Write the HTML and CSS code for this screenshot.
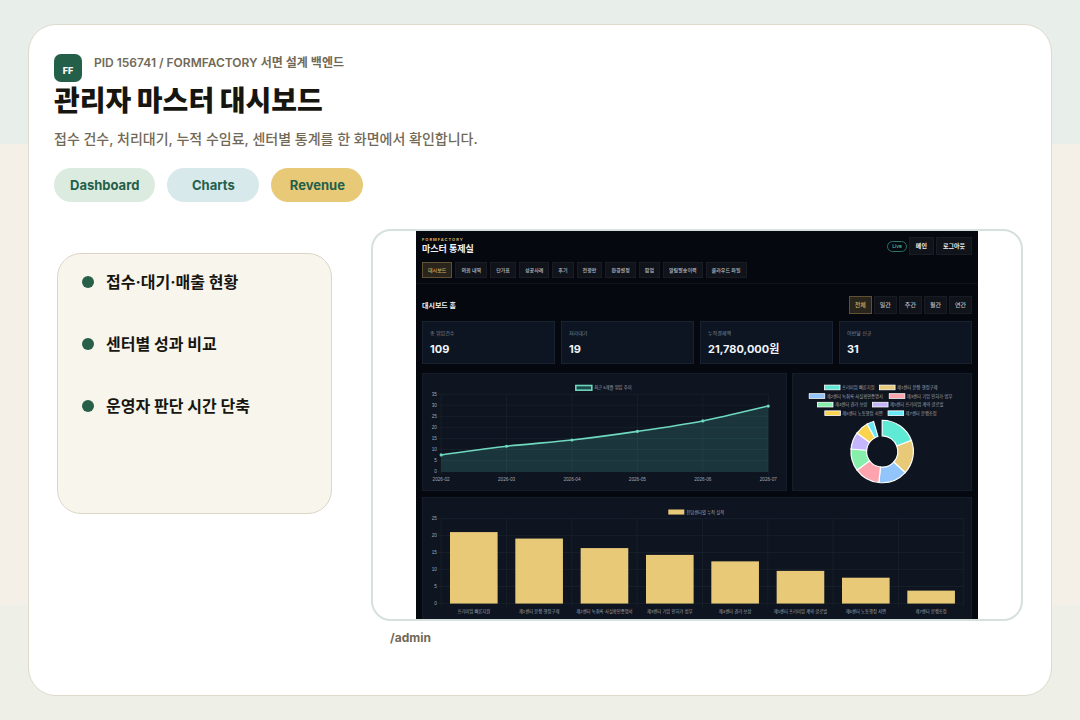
FILE: index.html
```
<!DOCTYPE html>
<html lang="ko">
<head>
    <meta charset="UTF-8">
    <meta name="viewport" content="width=device-width, initial-scale=1.0">
    <title>관리자 마스터 대시보드</title>
    <link rel="stylesheet" href="styles.css">
</head>
<body>
    <main class="sheet">
        <header class="intro">
            <div class="logo">FF</div>
            <p class="eyebrow">PID 156741 / FORMFACTORY 서면 설계 백엔드</p>
        </header>
        <h1>관리자 마스터 대시보드</h1>
        <p class="lead">접수 건수, 처리대기, 누적 수임료, 센터별 통계를 한 화면에서 확인합니다.</p>
        <div class="tags">
            <span class="tag green">Dashboard</span>
            <span class="tag blue">Charts</span>
            <span class="tag gold">Revenue</span>
        </div>

        <div class="content">
            <ul class="points">
                <li>접수·대기·매출 현황</li>
                <li>센터별 성과 비교</li>
                <li>운영자 판단 시간 단축</li>
            </ul>

            <figure class="preview">
                <div class="frame">
                    <div class="admin">
                        <div class="admin-header">
                            <div class="admin-top">
                                <div>
                                    <div class="brand">FORMFACTORY</div>
                                    <h2>마스터 통제실</h2>
                                </div>
                                <div class="actions">
                                    <span class="live">Live</span>
                                    <button>메인</button>
                                    <button>로그아웃</button>
                                </div>
                            </div>
                            <nav class="menu">
                                <button class="active">대시보드</button>
                                <button>의뢰 내역</button>
                                <button>단가표</button>
                                <button>성공사례</button>
                                <button>후기</button>
                                <button>전광판</button>
                                <button>환경설정</button>
                                <button>팝업</button>
                                <button>알림발송이력</button>
                                <button>클라우드 파일</button>
                            </nav>
                        </div>

                        <div class="admin-body">
                            <div class="section-head">
                                <h3>대시보드 홈</h3>
                                <div class="period">
                                    <button class="active">전체</button>
                                    <button>일간</button>
                                    <button>주간</button>
                                    <button>월간</button>
                                    <button>연간</button>
                                </div>
                            </div>
                            <div class="stats">
                                <div class="stat"><span>총 위임건수</span><strong>109</strong></div>
                                <div class="stat"><span>처리대기</span><strong>19</strong></div>
                                <div class="stat"><span>누적결제액</span><strong>21,780,000원</strong></div>
                                <div class="stat"><span>이번달 신규</span><strong>31</strong></div>
                            </div>
                            <div class="charts">
                                <div class="panel"><svg id="trend" viewBox="0 0 935 302"></svg></div>
                                <div class="panel"><svg id="share" viewBox="0 0 461 302"></svg></div>
                            </div>
                            <div class="panel"><svg id="centers" viewBox="0 0 1409 330"></svg></div>
                        </div>
                    </div>
                </div>
                <figcaption>/admin</figcaption>
            </figure>
        </div>
    </main>

    <script src="charts.js"></script>
</body>
</html>
```
FILE: styles.css
```
* {
    box-sizing: border-box;
}

body {
    margin: 0;
    min-height: 100vh;
    padding: 24px 28px;
    font-family: Inter, "Noto Sans CJK KR", sans-serif;
    color: #17150f;
    background: linear-gradient(#e8eee9 20%, #f4f0e8 20%, #f4f0e8 84%, #eeefe6 84%);
}

h1, h2, h3, p, ul, figure {
    margin: 0;
    padding: 0;
}

button {
    font-family: inherit;
    margin: 0;
    cursor: pointer;
}

.sheet {
    min-height: calc(100vh - 48px);
    padding: 29px 28px 29px 25px;
    border: 1px solid #dddacb;
    border-radius: 28px;
    background: #fff;
}

.intro {
    display: flex;
    gap: 12px;
}

.logo {
    width: 28px;
    height: 28px;
    padding-top: 4px;
    border-radius: 7px;
    background: #245f49;
    color: #fff;
    font-size: 9px;
    font-weight: 800;
    line-height: 26px;
    text-align: center;
}

.eyebrow {
    color: #716956;
    font-size: 12px;
    font-weight: 600;
    line-height: 18px;
}

h1 {
    font-size: 28px;
    font-weight: 900;
    line-height: 38px;
}

.lead {
    margin-top: 8px;
    color: #716956;
    font-size: 14px;
    font-weight: 500;
    line-height: 22px;
}

.tags {
    display: flex;
    gap: 12px;
    margin-top: 18px;
}

.tag {
    min-width: 92px;
    padding: 0 16px;
    border-radius: 17px;
    color: #245f49;
    font-size: 13px;
    font-weight: 700;
    line-height: 34px;
    text-align: center;
}

.green {
    background: #dcebdf;
}

.blue {
    background: #d8e9ec;
}

.gold {
    background: #e7c978;
}

.content {
    display: flex;
    align-items: flex-start;
    gap: 39px;
    margin-top: 27px;
}

.points {
    flex: 0 0 275px;
    display: flex;
    flex-direction: column;
    gap: 38px;
    min-height: 261px;
    margin: 24px 0 0 3px;
    padding: 16px 24px;
    border: 1px solid #ddd6c6;
    border-radius: 24px;
    background: #f8f5ed;
    list-style: none;
}

.points li {
    display: flex;
    align-items: center;
    gap: 12px;
    font-size: 16px;
    font-weight: 700;
    line-height: 24px;
}

.points li::before {
    content: "";
    width: 12px;
    height: 12px;
    border-radius: 50%;
    background: #285f49;
}

.preview {
    flex: 1;
    min-width: 0;
}

.frame {
    padding: 0 43px;
    border: 2px solid #d6e0dc;
    border-radius: 20px;
    overflow: hidden;
}

figcaption {
    margin-left: 19px;
    padding-top: 8px;
    color: #716956;
    font-size: 12px;
    font-weight: 700;
    line-height: 18px;
}

/* admin screen */
.admin {
    aspect-ratio: 562 / 388;
    min-height: 0;
    overflow: hidden;
    background: #05080f;
    color: #f1f4f9;
}

.admin button {
    padding: 0 5px;
    border: 1px solid #191d23;
    border-radius: 0;
    background: #10141a;
    color: #b9bec6;
    font-size: 5px;
    font-weight: 500;
    line-height: 14px;
    white-space: nowrap;
}

.admin button.active {
    border-color: #5f5131;
    background: #29251c;
    color: #d0ae62;
}

.admin-header {
    padding: 6px 6px 5px;
    border-bottom: 1px solid #0e131a;
}

.admin-top {
    display: flex;
    justify-content: space-between;
}

.brand {
    color: #d8b766;
    font-size: 4px;
    font-weight: 700;
    line-height: 6px;
    letter-spacing: 1px;
}

h2 {
    font-size: 9px;
    font-weight: 700;
    line-height: 12px;
}

.actions {
    display: flex;
    align-items: center;
    gap: 2px;
}

.live {
    padding: 0 4px;
    border: 1px solid #2b7564;
    border-radius: 6px;
    color: #5bd6b0;
    font-size: 5px;
    line-height: 9px;
}

.admin .actions button,
.admin .period button {
    font-size: 6px;
    line-height: 16px;
}

.admin .actions button {
    padding: 0 6px;
    color: #eef1f5;
    font-weight: 600;
}

.menu {
    display: flex;
    gap: 3px;
    margin-top: 7px;
}

.admin-body {
    display: flex;
    flex-direction: column;
    padding: 12px 6px 0;
}

.section-head {
    display: flex;
    align-items: center;
    justify-content: space-between;
}

h3 {
    font-size: 7px;
    font-weight: 700;
}

.period {
    display: flex;
    gap: 2px;
}

.stats {
    display: grid;
    grid-template-columns: repeat(4, 1fr);
    gap: 6px;
    margin-top: 7px;
}

.stat {
    display: flex;
    flex-direction: column;
    padding: 7px 7px 6px;
    border: 1px solid #182231;
    background: #0e1522;
}

.stat span {
    color: #7d8795;
    font-size: 5px;
    line-height: 8px;
}

.stat strong {
    margin-top: 4px;
    font-size: 11px;
    line-height: 16px;
}

.charts {
    display: grid;
    grid-template-columns: 935fr 461fr;
    gap: 5px;
    margin: 9px 0 6px;
}

.panel {
    background: #0e1420;
    outline: 1px solid #141d29;
    outline-offset: -1px;
}

.panel svg {
    display: block;
    width: 100%;
}

svg text {
    fill: #a0a7b1;
    font-family: "Liberation Sans", "Noto Sans CJK KR", sans-serif;
    font-size: 12px;
}

.legend {
    font-size: 11px;
}

.grid-line {
    stroke: #18232c;
    stroke-width: 2;
}

.trend-line {
    fill: none;
    stroke: #6fd9c0;
    stroke-width: 4;
}

.trend-area {
    fill: #5eead4;
    fill-opacity: 0.16;
}

.trend-key {
    fill: #1d4a4c;
    stroke: #6fd9c0;
    stroke-width: 4;
}

.bar {
    fill: #e7c978;
}

.slice {
    stroke: #fff;
    stroke-width: 3;
}

.swatch {
    stroke: #fff;
    stroke-width: 2;
}
```
FILE: charts.js
```
const NS = "http://www.w3.org/2000/svg";

function add(svg, tag, attrs, text) {
    const el = document.createElementNS(NS, tag);
    for (const key in attrs) el.setAttribute(key, attrs[key]);
    if (text !== undefined) el.textContent = text;
    svg.appendChild(el);
}

function drawGrid(svg, box, max, columns) {
    for (let v = 0; v <= max; v += 5) {
        const y = box.bottom - (box.bottom - box.top) * v / max;
        add(svg, "line", { class: "grid-line", x1: box.left - 8, y1: y, x2: box.right, y2: y });
        add(svg, "text", { x: box.left - 11, y: y + 4, "text-anchor": "end" }, v);
    }
    for (let i = 0; i <= columns; i++) {
        const x = box.left + (box.right - box.left) * i / columns;
        add(svg, "line", { class: "grid-line", x1: x, y1: box.top, x2: x, y2: box.bottom + 8 });
    }
}

function drawTrend() {
    const svg = document.getElementById("trend");
    const box = { left: 49, right: 887, top: 54, bottom: 253 };
    const labels = ["2026-02", "2026-03", "2026-04", "2026-05", "2026-06", "2026-07"];
    const values = [7.6, 11.5, 14.3, 18.2, 22.9, 29.6];
    const tension = 0.15;
    drawGrid(svg, box, 35, 5);

    const step = (box.right - box.left) / 5;
    const points = values.map((v, i) => [box.left + i * step, box.bottom - (box.bottom - box.top) * v / 35]);
    let path = `M${points[0]}`;
    for (let i = 1; i < points.length; i++) {
        const before = points[Math.max(i - 2, 0)], a = points[i - 1], b = points[i];
        const after = points[Math.min(i + 1, points.length - 1)];
        const c1 = [a[0] + (b[0] - before[0]) * tension, a[1] + (b[1] - before[1]) * tension];
        const c2 = [b[0] - (after[0] - a[0]) * tension, b[1] - (after[1] - a[1]) * tension];
        path += `C${c1} ${c2} ${b}`;
    }
    add(svg, "path", { class: "trend-area", d: `${path}L${box.right},${box.bottom}L${box.left},${box.bottom}Z` });
    add(svg, "path", { class: "trend-line", d: path });
    points.forEach(([x, y], i) => {
        add(svg, "circle", { class: "trend-key", cx: x, cy: y, r: 2 });
        add(svg, "text", { x: x, y: 276, "text-anchor": "middle" }, labels[i]);
    });
    add(svg, "rect", { class: "trend-key", x: 394, y: 32, width: 41, height: 12 });
    add(svg, "text", { class: "legend", x: 441, y: 42 }, "최근 6개월 위임 추이");
}

function drawShare() {
    const svg = document.getElementById("share");
    const items = [
        ["프리미엄 빠른지원", 22, "#5eead4", 83, 37],
        ["제1센터 분쟁·행정구제", 20, "#e7c978", 224, 37],
        ["제2센터 녹취록·사실확인증명서", 17, "#93c5fd", 44, 59],
        ["제3센터 기업 인허가·법무", 15, "#fda4af", 249, 59],
        ["제4센터 권리·보상", 13, "#86efac", 65, 81],
        ["제5센터 프리미엄 계약·글로벌", 10, "#c4b5fd", 206, 81],
        ["제6센터 노동행정 서면", 8, "#fcd34d", 84, 103],
        ["제7센터 분쟁조정", 4, "#67e8f9", 246, 103]
    ];
    const cx = 231, cy = 201, outer = 80, inner = 40;
    const at = (r, deg) => {
        const rad = (deg - 90) * Math.PI / 180;
        return `${cx + r * Math.cos(rad)},${cy + r * Math.sin(rad)}`;
    };
    let start = 0;
    items.forEach(([name, value, color, x, y]) => {
        const end = start + value / 109 * 344;
        add(svg, "path", {
            class: "slice", fill: color,
            d: `M${at(outer, start)}A${outer},${outer} 0 0 1 ${at(outer, end)}L${at(inner, end)}A${inner},${inner} 0 0 0 ${at(inner, start)}Z`
        });
        add(svg, "rect", { class: "swatch", fill: color, x: x, y: y - 6, width: 40, height: 12 });
        add(svg, "text", { class: "legend", x: x + 45, y: y + 4 }, name);
        start = end;
    });
}

function drawCenters() {
    const svg = document.getElementById("centers");
    const box = { left: 49, right: 1388, top: 55, bottom: 273 };
    const labels = ["프리미엄 빠른지원", "제1센터 분쟁·행정구제", "제2센터 녹취록·사실확인증명서", "제3센터 기업 인허가·법무",
        "제4센터 권리·보상", "제5센터 프리미엄 계약·글로벌", "제6센터 노동행정 서면", "제7센터 분쟁조정"];
    const values = [21, 19.1, 16.3, 14.3, 12.4, 9.6, 7.6, 3.8];
    drawGrid(svg, box, 25, 8);

    const step = (box.right - box.left) / 8;
    values.forEach((v, i) => {
        const x = box.left + step * (i + 0.5);
        const height = (box.bottom - box.top) * v / 25;
        add(svg, "rect", { class: "bar", x: x - 61, y: box.bottom - height, width: 122, height: height });
        add(svg, "text", { class: "legend", x: x, y: 296, "text-anchor": "middle" }, labels[i]);
    });
    add(svg, "rect", { class: "bar", x: 631, y: 32, width: 41, height: 13 });
    add(svg, "text", { class: "legend", x: 677, y: 43 }, "전담센터별 누적 실적");
}

drawTrend();
drawShare();
drawCenters();
```
